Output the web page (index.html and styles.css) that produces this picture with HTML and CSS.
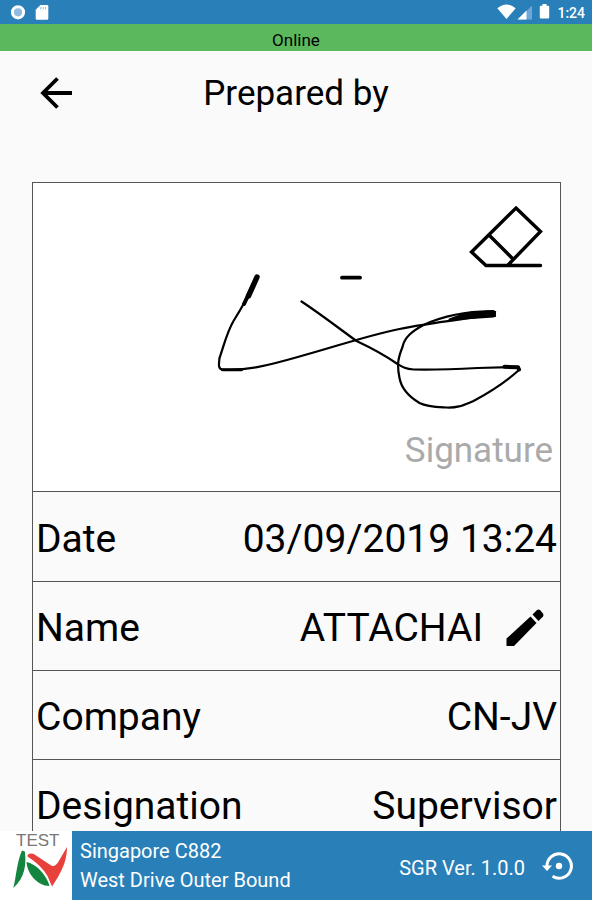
FILE: index.html
```html
<!DOCTYPE html>
<html lang="en">
<head>
    <meta charset="UTF-8">
    <meta name="viewport" content="width=device-width, initial-scale=1.0">
    <title>Prepared by</title>
    <link rel="stylesheet" href="styles.css">
</head>
<body>
    <div class="status-bar">
        <svg class="status-left" viewBox="0 0 60 24">
            <circle cx="18" cy="12.3" r="5.6" fill="#8fbbe0" stroke="#fff" stroke-width="3"/>
            <path d="M40.5 5H47q1.3 0 1.3 1.3v12.2q0 1.3-1.3 1.3H37q-1.3 0-1.3-1.3V9.8z" fill="#fff"/>
            <path d="M40.8 7v2.4M43.2 7v2.4M45.6 7v2.4" stroke="#8fbbe0" stroke-width="1"/>
        </svg>
        <svg class="status-right" viewBox="0 0 60 24">
            <path d="M0.3 8.3Q9.5 0.7 18.7 8.3L9.5 19z" fill="#fff"/>
            <path d="M35 5.5V19.5H21z" fill="#6fa8d6"/>
            <path d="M29.5 10.5V19.5H20.5z" fill="#fff"/>
            <path d="M45.5 4h4v1.7h1.7q1 0 1 1v10.8q0 1-1 1h-7.4q-1 0-1-1V6.700q0-1 1-1h1.700z" fill="#fff"/>
        </svg>
        <span class="clock">1:24</span>
    </div>
    <div class="online-bar"><span>Online</span></div>

    <header class="page-header">
        <svg class="back-icon" viewBox="0 0 34 34" fill="none" stroke="#000" stroke-width="3.8">
            <path d="M33 17H4M18.500 2.500L4 17l14.500 14.500"/>
        </svg>
        <h1>Prepared by</h1>
    </header>

    <main class="sheet">
        <div class="signature-box">
            <svg class="signature" viewBox="34 183 526 308" fill="none" stroke="#000" stroke-linecap="round" stroke-linejoin="round">
                <!-- pen strokes -->
                <path d="M257.500 277C249 296 243 307 234 321C227 333 224 347 220 358C219 366 219 369 223 369.500C246 371 267 366 300 356.500C335 347 366 336 400 329C423 324 450 321 492 315" stroke-width="2.200"/>
                <path d="M257.500 277L249 296" stroke-width="5.500"/>
                <path d="M254 284L244.500 304" stroke-width="4"/>
                <path d="M223 369.700L242 369.700" stroke-width="3"/>
                <path d="M342.500 277.700H360.500" stroke-width="3.800"/>
                <path d="M302 301.500C321 314 339 328 357 341C372 348 385 355 398 364C403 367 406 369 414 369.500C437 370 459 369 478 368L519 367" stroke-width="2.200"/>
                <path d="M505 366.800L518.500 367.200L519.500 369.500" stroke-width="4"/>
                <path d="M519.500 370C504 384 487 394 474 401C464 405 459 408 447 407.500C437 407 428 407 420 403C410 397 402 389 400 378C397 364 399 357 403 347C405 337 413 331 424 325C444 316 466 311 494 311.500" stroke-width="2.200"/>
                <path d="M494 311L466 313.500L450 319.500L494 316.500z" fill="#000" stroke-width="2"/>
                <path d="M488 313.800L493.500 314" stroke-width="6" stroke-linecap="square"/>
                <!-- eraser -->
                <path d="M516.500 208L541 231.500L508 265.500H486.500L472 252z M490 235.500L513 258.500M486.500 265.500H541" stroke-width="3.400" stroke-linejoin="miter"/>
            </svg>
            <span class="signature-label">Signature</span>
        </div>
        <div class="row date">
            <span class="label">Date</span>
            <span class="value">03/09/2019 13:24</span>
        </div>
        <div class="row name">
            <span class="label">Name</span>
            <span class="value">ATTACHAI</span>
            <svg class="edit-icon" viewBox="0 0 38 38">
                <path d="M0.500 29.500L24.500 7.500L30.500 14L8 37H0.500z" fill="#000"/>
                <path d="M26.500 5.500L31 1Q32.500 0 34 1L37 4.500Q38 6 37 7.500L32.500 12z" fill="#000"/>
            </svg>
        </div>
        <div class="row company">
            <span class="label">Company</span>
            <span class="value">CN-JV</span>
        </div>
        <div class="row designation">
            <span class="label">Designation</span>
            <span class="value">Supervisor</span>
        </div>
    </main>

    <footer class="footer">
        <div class="logo">
            <span>TEST</span>
            <svg viewBox="0 0 54 40">
                <path d="M9 1.500L11.800 2.500C13.500 15 12 29 0.300 39C3 29 4 12 9 1.500z" fill="#14853f"/>
                <path d="M14.500 6Q19 3 23 6.500L39 17Q43 18 47 10L54-2C54 10 50 19 45 28L39 37.500L34.500 27Q28 16 14.500 7.500z" fill="#e8403a"/>
                <path d="M13.500 13C23 15 33 25 36.500 37C24 37 14 24 13.500 13z" fill="#14853f"/>
            </svg>
        </div>
        <div class="project">
            <div>Singapore C882</div>
            <div class="site">West Drive Outer Bound</div>
        </div>
        <span class="version">SGR Ver. 1.0.0</span>
        <svg class="restore-icon" viewBox="0 0 32 30">
            <path d="M5 15.500A12.200 12.200 0 1 1 10.500 25.200" fill="none" stroke="#fff" stroke-width="3"/>
            <path d="M0 14.500H10L5 20z" fill="#fff"/>
            <circle cx="17" cy="15" r="3.200" fill="#fff"/>
        </svg>
    </footer>
</body>
</html>
```
FILE: styles.css
```css
:root {
    --blue: #2980b9;
    --green: #5cb85c;
    --line: #555;
}

* {
    margin: 0;
    padding: 0;
    box-sizing: border-box;
}

body {
    font-family: Roboto, sans-serif;
    background: #fafafa;
    color: #000;
    height: 100vh;
    display: flex;
    flex-direction: column;
    overflow: hidden;
}

svg {
    display: block;
    flex-shrink: 0;
}

.status-bar {
    background: var(--blue);
    height: 24px;
    flex-shrink: 0;
    display: flex;
    align-items: center;
    padding-right: 7px;
}

.status-left {
    width: 60px;
    height: 24px;
}

.status-right {
    width: 60px;
    height: 24px;
    margin-left: auto;
}

.clock {
    color: #fff;
    font-size: 14px;
    font-weight: 500;
    line-height: 24px;
    padding-top: 2px;
}

.online-bar {
    background: var(--green);
    height: 27px;
    flex-shrink: 0;
    text-align: center;
    font-size: 17px;
    line-height: 33px;
}

.page-header {
    height: 131px;
    flex-shrink: 0;
    display: flex;
    align-items: flex-start;
    padding: 25px 40px 0 39px;
}

.back-icon {
    width: 34px;
    height: 34px;
}

.page-header h1 {
    flex: 1;
    padding-right: 33px;
    text-align: center;
    font-size: 35px;
    font-weight: 400;
    line-height: 36px;
}

.sheet {
    flex: 1;
    min-height: 0;
    overflow: hidden;
    margin: 0 31px 0 32px;
    border: 1px solid var(--line);
    border-bottom: none;
}

.signature-box {
    position: relative;
    height: 308px;
    background: #fff;
}

.signature {
    width: 100%;
    height: 308px;
}

.signature-label {
    position: absolute;
    right: 7px;
    bottom: 20px;
    font-size: 35px;
    line-height: 41px;
    color: #aaa;
}

.row {
    height: 89px;
    border-top: 1px solid var(--line);
    display: flex;
    align-items: center;
    justify-content: space-between;
    padding: 4px 3px 0;
    font-size: 39px;
    white-space: nowrap;
}

.date {
    height: 90px;
}

.name .value {
    margin-left: auto;
    margin-right: 23px;
}

.edit-icon {
    width: 38px;
    height: 38px;
    margin-right: 13px;
}

.footer {
    background: var(--blue);
    height: 69px;
    flex-shrink: 0;
    display: flex;
    align-items: center;
    padding-right: 18px;
    color: #fff;
    font-size: 20px;
}

.logo {
    width: 72px;
    height: 69px;
    background: #fff;
    padding: 2px 0 0 13px;
}

.logo span {
    display: block;
    padding-left: 3px;
    font-family: "Liberation Sans", Arial, sans-serif;
    font-size: 17px;
    line-height: 16px;
    color: #777;
}

.logo svg {
    width: 54px;
    height: 40px;
    overflow: visible;
}

.project {
    padding-left: 8px;
    line-height: 29px;
}

.version {
    margin-left: auto;
    margin-right: 17px;
    padding-top: 4px;
}

.restore-icon {
    width: 32px;
    height: 30px;
}
```
